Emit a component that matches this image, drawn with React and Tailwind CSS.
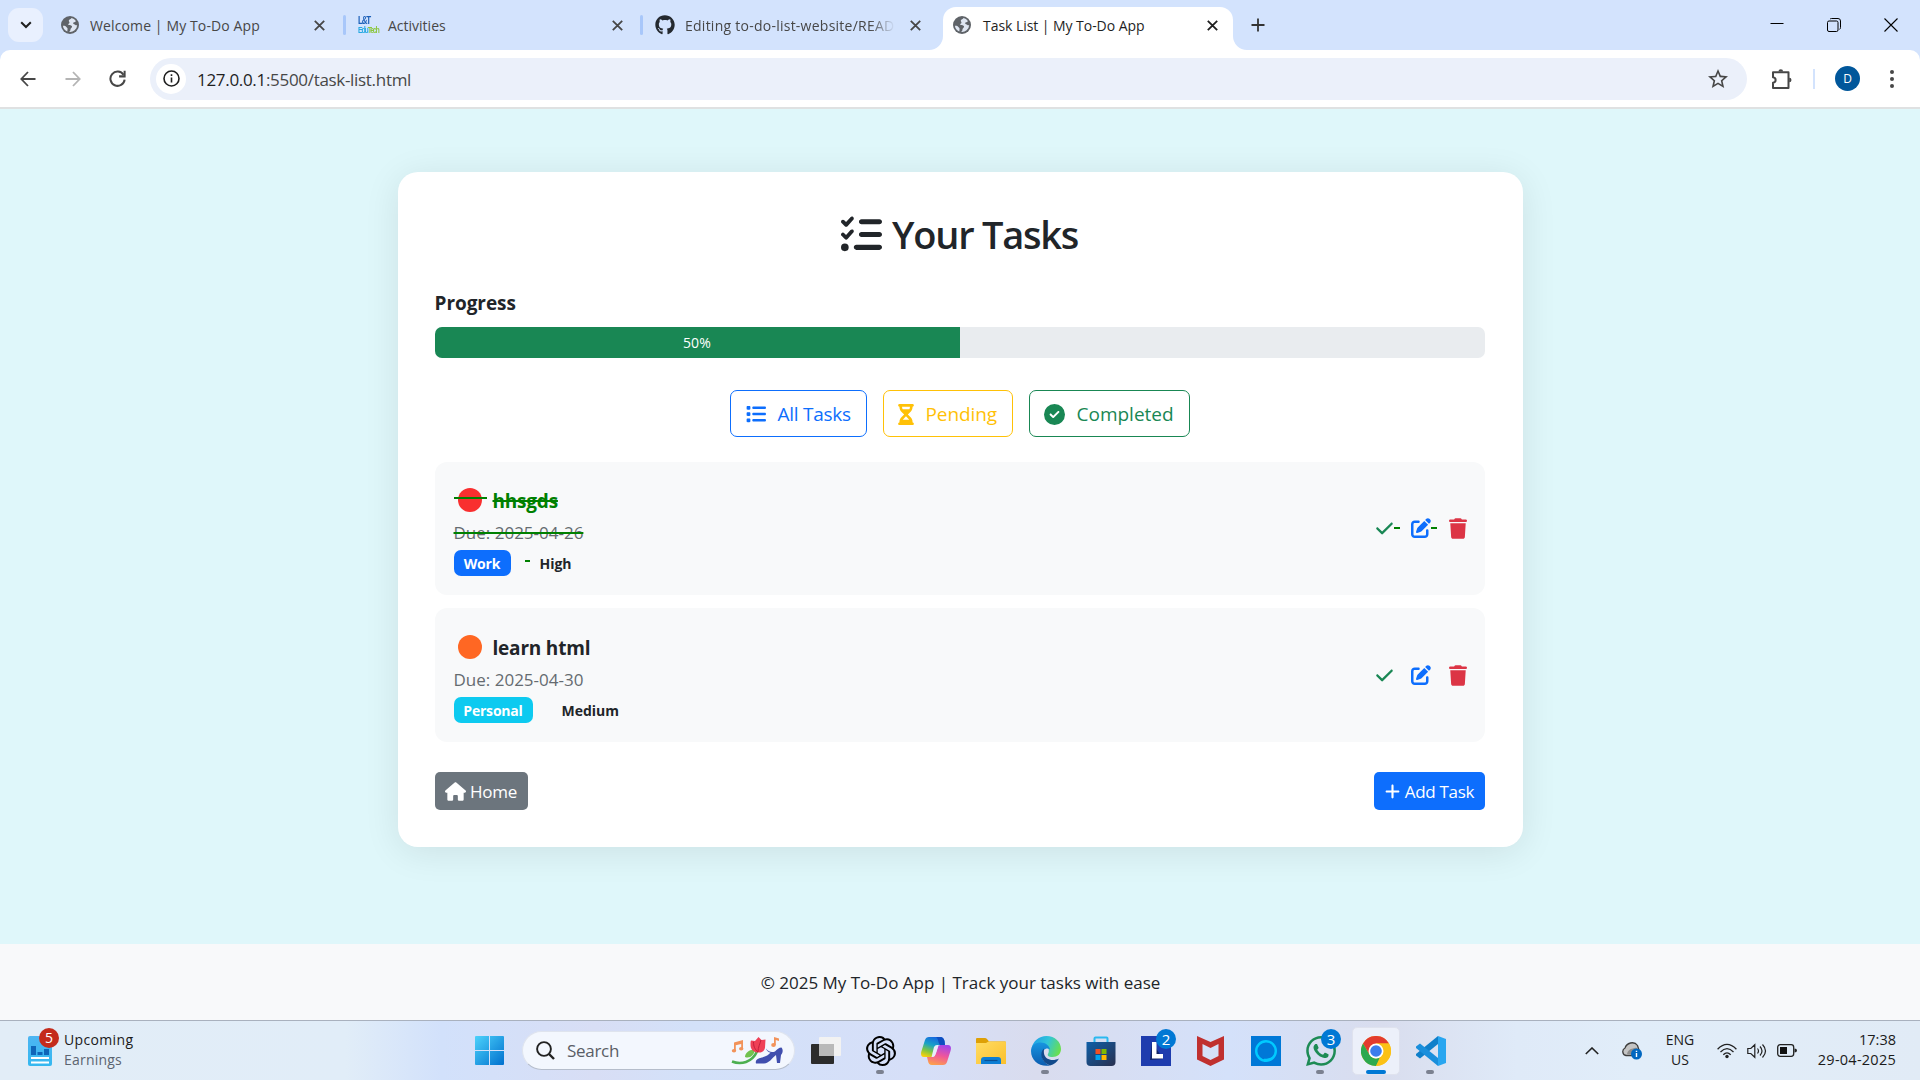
import React from "react";
import { FaListCheck, FaList, FaHourglassHalf, FaCircleCheck, FaCheck, FaPenToSquare, FaTrash, FaHouse, FaPlus, FaGithub } from "react-icons/fa6";
import { SiOpenai, SiWhatsapp } from "react-icons/si";
import { MdStarBorder } from "react-icons/md";

function CloseIcon({ className = "" }) {
  return (
    <svg viewBox="0 0 11 11" className={"size-[11px] shrink-0 " + className} fill="none" stroke="currentColor" strokeWidth="1.8">
      <path d="M.8.8l9.4 9.4M10.2.8L.8 10.2" />
    </svg>
  );
}

function GlobeIcon() {
  return (
    <svg viewBox="0 0 18 18" className="ml-[2px] size-[18px] shrink-0">
      <circle cx="9" cy="9" r="9" fill="#5f6368" />
      <path d="M10.500 2c-.3 1.500-2.500 1.200-2.700 2.600-.2 1.200 1 1.400.6 2.400-.3.800-1.300.6-1.200 1.500.2 1 2.300.5 3.300 1.200 1 .6.400 1.800-.2 2.300-.8.600-.8 1.500-1 2.400-.2.800-.8 1.300-1.500 1.500A7.200 7.200 0 0 0 16.200 9c-.8.500-1.500.3-2-.3-.6-.8-1.700-.4-2-1.300-.3-1 .9-1.400 1.800-1.500.500-.1.800-.5.900-.9A7.200 7.200 0 0 0 10.500 2z" fill="#dfe6f2" />
      <path d="M1.900 9.800c1.200-.2 2.600 0 3.200.9.600 1 1.500 1 1.500 2 0 1-.3 2-.3 2.900A7.200 7.200 0 0 1 1.900 9.800z" fill="#dfe6f2" />
    </svg>
  );
}

function EduLogo() {
  return (
    <div className="flex w-[18px] shrink-0 scale-y-[1.35] flex-col font-['Liberation_Sans',sans-serif] font-bold">
      <span className="h-[7px] w-[18px] text-[8px] leading-[7px] tracking-[-1.2px] whitespace-nowrap text-[#1b5fb8]">L&amp;T</span>
      <span className="h-[7px] w-[18px] text-[7px] leading-[7px] tracking-[-1.2px] whitespace-nowrap text-[#27a9e1]">Edu<span className="text-[#8cc63f]">Tech</span></span>
    </div>
  );
}

function TabStrip() {
  return (
    <div className="flex h-[50px] items-center bg-[#d3e3fd] text-[14px] text-[#474747]">
      <div className="ml-2 flex h-[34px] w-[35px] items-center justify-center rounded-[11px] bg-[#e9f0fe] text-[#1f1f1f]">
        <svg viewBox="0 0 12 8" className="h-2 w-3" fill="none" stroke="currentColor" strokeWidth="2"><path d="M1.2 1.2L6 6l4.8-4.8" /></svg>
      </div>
      <div className="flex h-full w-[300px] items-center pl-4">
        <GlobeIcon />
        <span className="ml-[11px] w-[224px] tracking-[0.12px] whitespace-nowrap">Welcome | My To-Do App</span>
        <CloseIcon />
      </div>
      <div className="h-5 w-[3px] rounded-full bg-[#a8c7fa]" />
      <div className="flex h-full w-[294px] items-center pl-3">
        <EduLogo />
        <span className="ml-3 w-[224px] whitespace-nowrap">Activities</span>
        <CloseIcon />
      </div>
      <div className="h-5 w-[3px] rounded-full bg-[#a8c7fa]" />
      <div className="flex h-full w-[300px] items-center pl-3">
        <FaGithub className="size-5 shrink-0 text-[#24292f]" />
        <span className="ml-[10px] w-[210px] overflow-hidden whitespace-nowrap tracking-[0.25px] [mask-image:linear-gradient(to_right,black_88%,transparent_100%)]">Editing to-do-list-website/READ</span>
        <CloseIcon className="ml-[15px]" />
      </div>
      <div className="relative mt-[7px] flex h-[43px] w-[290px] items-center rounded-t-[13px] bg-white pl-2 text-[#1f1f1f]">
        <svg viewBox="0 0 14 14" className="absolute bottom-0 -left-[14px] size-[14px]"><path d="M14 0v14H0A14 14 0 0 0 14 0z" fill="#fff" /></svg>
        <svg viewBox="0 0 14 14" className="absolute -right-[14px] bottom-0 size-[14px]"><path d="M0 0v14h14A14 14 0 0 1 0 0z" fill="#fff" /></svg>
        <div className="-mt-[7px] flex items-center">
          <GlobeIcon />
          <span className="ml-[12px] w-[224px] whitespace-nowrap tracking-[-0.05px]">Task List | My To-Do App</span>
          <CloseIcon />
        </div>
      </div>
      <svg viewBox="0 0 14 14" className="ml-[18px] size-[14px]" fill="none" stroke="#333" strokeWidth="1.8"><path d="M7 .5v13M.5 7h13" /></svg>
      <div className="ml-auto flex items-center gap-[43px] pr-[22px] text-black">
        <svg viewBox="0 0 14 14" className="size-[14px]" fill="none" stroke="currentColor"><path d="M.5 5.500h13" /></svg>
        <svg viewBox="0 0 14 14" className="size-[14px]" fill="none" stroke="currentColor"><rect x=".5" y="3" width="10.500" height="10.500" rx="1.500" /><path d="M3 1.200Q3.500.5 4.500.5H11Q13.500.5 13.500 3V9.500Q13.500 11 12.500 11.300" /></svg>
        <svg viewBox="0 0 14 14" className="size-[14px]" fill="none" stroke="currentColor" strokeWidth="1.1"><path d="M.5.5l13 13M13.500.5l-13 13" /></svg>
      </div>
    </div>
  );
}

function Toolbar() {
  return (
    <div className="bg-[#d3e3fd]">
      <div className="flex h-[59px] items-center rounded-t-[10px] border-b-2 border-[#dfe1e2] bg-white">
        <svg viewBox="0 0 16 16" className="ml-5 size-[16px]" fill="none" stroke="#474747" strokeWidth="1.8"><path d="M15.500 8H1.500M8 1L1.300 8 8 15" /></svg>
        <svg viewBox="0 0 16 16" className="ml-[29px] size-[16px]" fill="none" stroke="#b4b4b4" strokeWidth="1.8"><path d="M.5 8h14M8 1l6.700 7L8 15" /></svg>
        <svg viewBox="0 0 16 16" className="ml-7 size-[17px]" fill="none" stroke="#474747" strokeWidth="1.9"><path d="M13.700 4.600A6.700 6.700 0 1 0 14.700 9" /><path d="M14.700.8v5.200H9.500" /></svg>
        <div className="ml-6 flex h-[42px] w-[1597px] items-center rounded-full bg-[#ebf0fa] pl-[6px]">
          <div className="flex size-[30px] items-center justify-center rounded-full bg-white">
            <svg viewBox="0 0 17 17" className="size-[17px]" fill="none" stroke="#1f1f1f" strokeWidth="1.6"><circle cx="8.500" cy="8.500" r="7.500" /><path d="M8.500 7.500v5M8.500 4.300v1.700" /></svg>
          </div>
          <span className="mt-[2px] ml-[11px] text-[17px] tracking-[-0.31px] text-[#474747]"><span className="text-[#1f1f1f]">127.0.0.1</span>:5500/task-list.html</span>
          <MdStarBorder className="mr-[17px] ml-auto size-[24px] text-[#474747]" />
        </div>
        <svg viewBox="0 0 22 22" className="ml-6 size-[22px]" fill="none" stroke="#474747" strokeWidth="2" strokeLinejoin="round">
          <path d="M2 4.200h15.500V20H2v-5.200c3.500-.5 3.500-5 0-5.500z" /><path d="M7.500 3.500a2.300 2.300 0 0 1 4.600 0zM18.200 9.700a2.300 2.300 0 0 1 0 4.600z" fill="#474747" stroke="none" />
        </svg>
        <div className="ml-[20px] h-5 w-[2px] bg-[#d3e3fd]" />
        <div className="ml-[20px] flex size-[25px] items-center justify-center rounded-full bg-[#01579b] text-[12px] text-white">D</div>
        <div className="ml-[30px] flex flex-col gap-[3px]">
          <i className="size-1 rounded-full bg-[#474747]" /><i className="size-1 rounded-full bg-[#474747]" /><i className="size-1 rounded-full bg-[#474747]" />
        </div>
      </div>
    </div>
  );
}

function Task({ title, due, ball, done, tag, tagClass, priority, cardClass }) {
  return (
    <div className={"flex rounded-[12px] bg-[#f8f9fa] pr-[18px] pl-[19px] " + cardClass}>
      <div>
        <div className="flex h-[30px] items-center">
          <div className="relative flex w-[33px] justify-center">
            <i className={"-mt-[2px] size-6 rounded-full " + ball} />
            {done && <i className="absolute top-[7px] left-0 h-[2px] w-full bg-[#008000]" />}
          </div>
          <span className={"ml-[6px] text-[19px] font-bold tracking-[-0.2px] " + (done ? "text-[#008000] line-through decoration-[#008000] decoration-2" : "text-[#212529]")}>{title}</span>
        </div>
        <div className={"flex h-[34px] items-center text-[17px] text-[#656b70] " + (done ? "line-through decoration-[#008000] decoration-2" : "")}>{due}</div>
        <div className="flex h-[26px] items-center text-[14px] font-bold">
          <span className={"flex h-full items-center justify-center rounded-[7px] tracking-[-0.2px] text-white " + tagClass}>{tag}</span>
          <span className="flex w-[29px] justify-center">{done && <i className="mt-[-3px] ml-[4px] h-[2px] w-[5px] bg-[#008000]" />}</span>
          <span className="tracking-[-0.02px] text-[#212529]">{priority}</span>
        </div>
      </div>
      <div className="mt-[29px] ml-auto flex h-[26px] items-center">
        <FaCheck className="size-[19px] text-[#198754]" />
        <i className={"h-[2px] w-[6px] " + (done ? "bg-[#008000]" : "")} />
        <FaPenToSquare className="ml-[11px] size-[20px] text-[#0d6efd]" />
        <i className={"h-[2px] w-[6px] " + (done ? "bg-[#008000]" : "")} />
        <FaTrash className="ml-[12px] h-[21px] w-[18px] text-[#dc3545]" />
      </div>
    </div>
  );
}

function Main() {
  return (
    <div className="h-[835px] bg-[#dff7fa] pt-[63px]">
      <div className="mx-auto h-[675px] w-[1125px] rounded-[20px] bg-white pr-[38px] pl-[37px] pt-[36px] shadow-[0_5px_36px_rgba(0,0,0,0.09)]">
        <div className="flex h-[52px] items-center justify-center gap-[10px] text-[38px] font-semibold tracking-[-1.25px] text-[#212529]">
          <FaListCheck className="size-[41px]" />Your Tasks
        </div>
        <div className="mt-[28px] flex h-[30px] items-center text-[19px] font-bold tracking-[-0.05px] text-[#212529]">Progress</div>
        <div className="mt-[9px] flex h-[31px] overflow-hidden rounded-[7px] bg-[#e9ecef]">
          <div className="flex w-1/2 items-center justify-center bg-[#198754] text-[14px] tracking-[0.2px] text-white">50%</div>
        </div>
        <div className="mt-[32px] flex h-[47px] justify-center gap-4 text-[19px]">
          <div className="flex w-[137px] items-center rounded-[7px] border border-[#0d6efd] pt-px pl-[15px] tracking-[-0.25px] whitespace-nowrap text-[#0d6efd]"><FaList className="mr-[12px] size-5" />All Tasks</div>
          <div className="flex w-[130px] items-center rounded-[7px] border border-[#ffc107] pt-px pl-[14px] tracking-[-0.1px] text-[#ffc107]"><FaHourglassHalf className="mr-[12px] h-[21px] w-4" />Pending</div>
          <div className="flex w-[161px] items-center rounded-[7px] border border-[#198754] pt-px pl-[14px] text-[#198754]"><FaCircleCheck className="mr-[12px] size-[21px]" />Completed</div>
        </div>
        <Task title="hhsgds" due="Due: 2025-04-26" ball="bg-[#f92f2f]" done tag="Work" tagClass="w-[57px] bg-[#0d6efd]" priority="High" cardClass="mt-[25px] h-[133px] pt-[24px]" />
        <Task title="learn html" due="Due: 2025-04-30" ball="bg-[#ff6723]" tag="Personal" tagClass="w-[79px] bg-[#0dcaf0]" priority="Medium" cardClass="mt-[13px] h-[134px] pt-[25px]" />
        <div className="mt-[30px] flex h-[38px] justify-between text-[17px] text-white">
          <div className="flex w-[93px] items-center justify-center gap-[4px] rounded-[5px] bg-[#6c757d] pt-px tracking-[-0.2px]"><FaHouse className="h-[19px] w-[21px]" />Home</div>
          <div className="flex w-[111px] items-center justify-center gap-1 rounded-[5px] bg-[#0d6efd] pt-px tracking-[-0.3px]"><FaPlus className="size-[17px]" />Add Task</div>
        </div>
      </div>
    </div>
  );
}

function Slot({ children, dot, badge }) {
  return (
    <div className="relative flex h-full w-[55px] items-center justify-center">
      {children}
      {dot && <i className="absolute bottom-[6px] left-[23px] h-1 w-2 rounded-full bg-[#7b8190]" />}
      {badge && <span className="absolute top-[8px] left-[28px] flex size-5 items-center justify-center rounded-full bg-[#0078d4] text-[15px] text-white">{badge}</span>}
    </div>
  );
}

function Flower() {
  return (
    <svg viewBox="0 0 54 30" className="h-[30px] w-[54px]">
      <g fill="#f2935a"><path d="M3 6.500l9-2.500v8.500h-1.800V8L4.800 9.300V15H3z" /><ellipse cx="3" cy="14.800" rx="2.200" ry="1.800" /><ellipse cx="10.200" cy="12.800" rx="2.200" ry="1.800" /></g>
      <path d="M1 25.500c9 3.500 20 1 25-10" stroke="#4caf50" strokeWidth="2.600" fill="none" />
      <path d="M14 21c0-4 5-8 10-7-1 5-5 9-10 7z" fill="#72c24f" />
      <path d="M20 4.500l4 .5 3.500-4 3 3 4-.5-.5 8c-.5 4-3.500 5.500-7.500 5-5-.5-7-4-7-7.500 0-2 0-3.500.5-4.500z" fill="#ef4056" />
      <path d="M22.500 6c0 4 1 7 4.500 10M30 4c-1 4-3 7-3 12" stroke="#c21f3c" fill="none" />
      <g fill="#f2935a"><path d="M43 1l5 1.500v2.500l-3.200-1V9H43z" /><ellipse cx="42.500" cy="9" rx="2.300" ry="1.900" /></g>
      <path d="M35 12.500c3 4 6 4 9 3 2-2 4-4 6.500-4 1.800 2 1.500 5-.5 7.500L49 27h-3l-1-8c-4 3-7 8.500-12 8.500h-8c-1-3 1-5 6-6 4-1 7-3 8.500-5-2 0-4-2-4.500-4z" fill="#414fae" />
    </svg>
  );
}

function Taskbar() {
  return (
    <div className="flex h-[60px] shrink-0 items-center border-t border-[#a9b1be] bg-[linear-gradient(90deg,#e2edf7_0%,#e1edf8_18%,#d2e1fb_23%,#d8def5_31%,#d3e1f9_36%,#d6dff8_48%,#d9dcee_54%,#d4e1fa_64%,#d9ddee_72%,#dfeaf8_79%,#e1edf9_85%,#e1ebf6_100%)] text-[14px] leading-5 text-[#1b1b1b]">
      <div className="relative ml-7 h-[30px] w-6">
        <svg viewBox="0 0 24 30" className="h-[30px] w-6"><defs><linearGradient id="wd" x1="0" y1="0" x2="0" y2="1"><stop stopColor="#4db5f2" /><stop offset="1" stopColor="#35b8f0" /></linearGradient></defs><rect width="24" height="30" rx="2" fill="url(#wd)" /><path d="M3 10h5v9H3zM9.500 16h5v3h-5zM16 13h5v6h-5z" fill="#0f65b8" /><path d="M3 22h18M3 26.500h18" stroke="#fff" strokeWidth="1.800" /></svg>
        <span className="absolute -top-[8px] left-[11px] flex size-5 items-center justify-center rounded-full bg-[#c42b1c] text-[14px] text-white">5</span>
      </div>
      <div className="-mt-[2px] ml-3 w-[411px] tracking-[0.35px]"><div>Upcoming</div><div className="text-[#5c6470] tracking-[0.2px]">Earnings</div></div>
      <svg viewBox="0 0 29 29" className="size-[29px]"><defs><linearGradient id="wn" x1="0" y1="0" x2="1" y2="1"><stop stopColor="#4cd2fb" /><stop offset="1" stopColor="#0070ce" /></linearGradient></defs><path d="M1 0h13v14H0V1Q0 0 1 0zM15 0h13q1 0 1 1v13H15zM0 15h14v14H1q-1 0-1-1zM15 15h14v13q0 1-1 1H15z" fill="url(#wn)" /></svg>
      <div className="ml-[18px] flex h-[39px] w-[273px] items-center rounded-full border border-[#dfe4ee] border-b-[#b5bdcb] bg-[#f3f7fe] pl-[13px]">
        <svg viewBox="0 0 19 19" className="size-[19px]" fill="none" stroke="#222" strokeWidth="1.900"><circle cx="8" cy="8" r="6.900" /><path d="M13 13l5 5" strokeWidth="2.400" /></svg>
        <span className="ml-[12px] text-[17px] tracking-[-0.3px] text-[#5a5e66]">Search</span>
        <div className="mr-[9px] ml-auto"><Flower /></div>
      </div>
      <div className="ml-[3px] flex h-full items-center">
        <Slot><svg viewBox="0 0 30 29" className="h-[29px] w-[30px]"><rect y="8" width="23" height="20" rx="1" fill="#2c2c2c" /><rect x="8" y="1" width="22" height="19" rx="1" fill="#f2f2f2" /><path d="M8 8h15v12H9q-1 0-1-1z" fill="#b9b9b9" /></svg></Slot>
        <Slot dot><SiOpenai className="size-[30px] text-black" /></Slot>
        <Slot>
          <svg viewBox="0 0 30 28" className="h-[28px] w-[30px]">
            <defs><linearGradient id="ca" x1=".6" y1="0" x2=".2" y2="1"><stop stopColor="#1765e0" /><stop offset=".4" stopColor="#17a2c8" /><stop offset=".7" stopColor="#7cc544" /><stop offset="1" stopColor="#fbd10a" /></linearGradient><linearGradient id="cb" x1=".6" y1="0" x2=".3" y2="1"><stop stopColor="#a546e8" /><stop offset=".5" stopColor="#f0569a" /><stop offset="1" stopColor="#fda14a" /></linearGradient></defs>
            <path d="M8 0h11c3 0 4 2 4.500 4L24 8h-5c-2 0-3 1-4 4l-2 6c-.7 1.500-1.500 2-3 2H3c-3 0-3.500-3-2.500-6L4 3c.7-2 2-3 4-3z" fill="url(#ca)" />
            <path d="M22 28H11c-2.500 0-3.500-1.500-4-4l-1-4h5c2 0 3-1 4-4l2-6c.6-1.500 1.500-2 3-2h7c3 0 3.500 3 2.500 6l-3.500 11c-.6 2-2 3-4 3z" fill="url(#cb)" />
            <path d="M15 0h4c3 0 4 2 4.500 4L24 8h-5c-2-2-1.500-7-4-8z" fill="#0f4fc0" />
            <path d="M13 10q1-2 3-2h1.500l-2.500 8q-1 3.500-3 4h-1.500z" fill="#e8ecfa" />
          </svg>
        </Slot>
        <Slot><svg viewBox="0 0 30 26" className="h-[26px] w-[30px]"><defs><linearGradient id="fo" x1="0" y1="0" x2="1" y2="1"><stop stopColor="#ffdc63" /><stop offset="1" stopColor="#fbc02d" /></linearGradient></defs><path d="M0 1q0-1 1-1h8q1 0 2 1l2 2.500h16q1 0 1 1V8H0z" fill="#dea006" /><path d="M0 5h10l2.500-1.500H29q1 0 1 1V26H0z" fill="url(#fo)" /><path d="M5 26v-4q0-3 3-3h14q3 0 3 3v4z" fill="#0c7ed4" /><path d="M8.500 22.500h13" stroke="#0a4f92" strokeWidth="1.200" /></svg></Slot>
        <Slot dot>
          <svg viewBox="0 0 30 30" className="size-[30px]">
            <defs><linearGradient id="ea" x1="0" y1=".3" x2="1" y2=".6"><stop stopColor="#1f9fe8" /><stop offset=".5" stopColor="#31c5d8" /><stop offset="1" stopColor="#6be04a" /></linearGradient><linearGradient id="eb" x1="0" y1="0" x2="0" y2="1"><stop stopColor="#1795e0" /><stop offset="1" stopColor="#0c5cb0" /></linearGradient></defs>
            <path d="M.5 12.500C2 5 8 0 15.500 0 24 0 30 6 30 13c0 5-3.500 8-8.500 8-4 0-5.500-1.500-4.500-3 1.500-2.500 1-6-1.500-8.500C12 6 4 7 .5 12.500z" fill="url(#ea)" />
            <path d="M0 15C0 9 5 6.500 9.500 6.500c5.500 0 9 3.500 9.500 7-3-2.500-8 0-8 5.500 0 5 3.500 9 8 10.500C9 31.500 0 25 0 15z" fill="url(#eb)" />
            <path d="M13 12.500c-5 4-3 14 6 17 4-.8 7-3.500 9-7-6 3-14 1.500-15-5-.3-2 0-3.500 0-5z" fill="#114a8b" />
          </svg>
        </Slot>
        <Slot><svg viewBox="0 0 30 30" className="size-[30px]"><defs><linearGradient id="st" x1="0" y1="0" x2="1" y2="1"><stop stopColor="#0f5fa8" /><stop offset="1" stopColor="#29304f" /></linearGradient></defs><path d="M8.500 7V2.500q0-1 1-1h11q1 0 1 1V7" fill="none" stroke="#2bb9f0" strokeWidth="2" /><path d="M.5 6h29v20q0 4-4 4h-21q-4 0-4-4z" fill="url(#st)" /><path d="M9.500 13h5v5h-5z" fill="#f25022" /><path d="M15.500 13h5v5h-5z" fill="#7fba00" /><path d="M9.500 19h5v5h-5z" fill="#00a4ef" /><path d="M15.500 19h5v5h-5z" fill="#ffb900" /></svg></Slot>
        <Slot badge="2"><svg viewBox="0 0 30 30" className="size-[30px]"><path d="M0 0h30v30H0z" fill="#1e3cae" /><path d="M11 6L9 24l13-1z" fill="#122566" /><path d="M11 6h4.500v12H22v4.500H11z" fill="#fff" /></svg></Slot>
        <Slot><svg viewBox="0 0 27 30" className="h-[30px] w-[27px]"><path d="M0 0l13.500 6L27 0v23.500L13.500 30 0 23.500zM5.500 8v12l8 4 8-4V8l-8 4z" fill="#c0302f" fillRule="evenodd" /></svg></Slot>
        <Slot><svg viewBox="0 0 30 30" className="size-[30px]"><path d="M0 0h30v30H0z" fill="#0078d7" /><circle cx="15" cy="15" r="9.800" fill="none" stroke="#00caff" strokeWidth="2.400" /><path d="M13 22.800v3.200c5.500-.5 9.500-3.500 11.500-8-2.500 3.200-6.500 5-11.500 4.800z" fill="#00caff" /></svg></Slot>
        <Slot dot badge="3"><SiWhatsapp className="size-[30px] text-[#1d8b55]" /></Slot>
        <Slot>
          <div className="relative flex size-12 items-center justify-center rounded-[5px] border border-[#dfe2ee] bg-[#ecf0fa]">
            <svg viewBox="0 0 48 48" className="size-[30px]"><circle cx="24" cy="24" r="24" fill="#fbc116" /><path d="M3.200 12A24 24 0 0 1 44.800 12H24L13.600 30z" fill="#e33b2e" /><path d="M3.200 12L13.600 30Q18 36 24 36L30 34.500 24 48A24 24 0 0 1 3.200 12z" fill="#2da94f" /><path d="M24 12h20.800A24 24 0 0 1 24 48l10.400-18z" fill="#fbc116" /><circle cx="24" cy="24" r="12" fill="#fff" /><circle cx="24" cy="24" r="9.300" fill="#3b7ded" /></svg>
            <i className="absolute bottom-0 h-1 w-5 rounded-full bg-[#0078d4]" />
          </div>
        </Slot>
        <Slot dot><svg viewBox="0 0 30 30" className="size-[30px]"><path d="M22 0l8 3v24l-8 3z" fill="#29a6f0" /><path d="M22 0v8L4 22.500 0 19.500V18z" fill="#0f7fca" /><path d="M0 10.500L4 7.500 22 22v8L0 12z" fill="#1a8fdc" /></svg></Slot>
      </div>
      <svg viewBox="0 0 14 8" className="ml-[127px] h-2 w-[14px]" fill="none" stroke="#222" strokeWidth="1.600"><path d="M.8 7L7 1l6.200 6" /></svg>
      <svg viewBox="0 0 20 19" className="ml-[23px] h-[19px] w-5"><path d="M4 14.500a4 4 0 0 1-1-7.500C4.500 2 12-.5 15.500 4.500L17 9l-7 5.500z" fill="#c4c4c4" stroke="#3d3d3d" strokeWidth="1.300" /><path d="M5 13q1-5 6-5.500 3-1.500 5 .5l-6 5.500z" fill="#8e8e8e" /><circle cx="14.500" cy="13" r="5.500" fill="#0067c0" /><path d="M14.500 12v4M14.500 9.700v1.300" stroke="#fff" strokeWidth="1.400" /></svg>
      <div className="-mt-px ml-[21px] w-[34px] text-center"><div>ENG</div><div>US</div></div>
      <svg viewBox="0 0 20 16" className="ml-[20px] h-4 w-5" fill="none" stroke="#222" strokeWidth="1.300"><path d="M.6 6.200Q10-3.500 19.400 6.200M3.500 9Q10 2.300 16.500 9M6.300 11.700Q10 8 13.700 11.700" /><circle cx="10" cy="13.500" r="1.700" fill="#222" stroke="none" /></svg>
      <svg viewBox="0 0 20 16" className="ml-[10px] h-4 w-5" fill="none" stroke="#222" strokeWidth="1.200"><path d="M.8 5.500v5h3l4 3.800V1.700l-4 3.800zM10.500 5.500q2 2.500 0 5M13 3.500q4 4.500 0 9M15.500 1.500q6 6.500 0 13" /></svg>
      <svg viewBox="0 0 20 13" className="ml-[10px] h-[13px] w-5"><rect x=".7" y=".7" width="16" height="11.600" rx="2.500" fill="none" stroke="#222" strokeWidth="1.300" /><path d="M3 3h7v7H3z" fill="#111" /><path d="M17.500 4.500q2.500 0 2.500 2t-2.500 2z" fill="#222" /></svg>
      <div className="-mt-[2px] mr-6 ml-auto text-right text-[14.5px]"><div>17:38</div><div className="tracking-[0.25px]">29-04-2025</div></div>
    </div>
  );
}

export default function App() {
  return (
    <div className="flex h-[1080px] w-[1920px] flex-col overflow-hidden font-['Open_Sans',sans-serif]">
      <TabStrip />
      <Toolbar />
      <Main />
      <div className="flex h-[76px] items-center justify-center bg-[#f8f9fa] pt-[2px] pl-px text-[17px] text-[#212529]">© 2025 My To-Do App | Track your tasks with ease</div>
      <Taskbar />
    </div>
  );
}
